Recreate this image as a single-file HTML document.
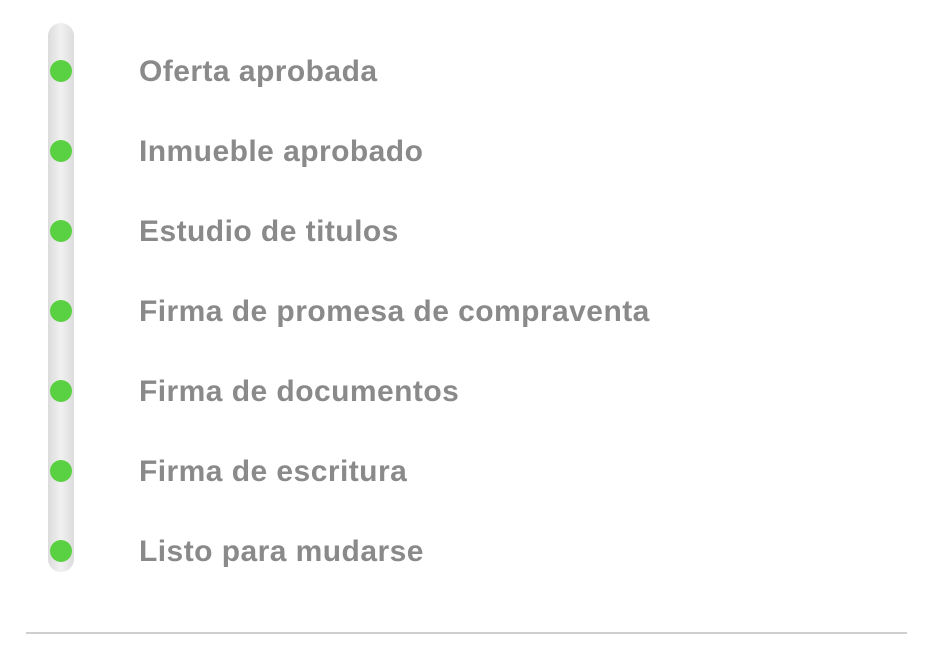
<!DOCTYPE html>
<html><head><style>
body{margin:0;width:936px;height:648px;background:#fff;position:relative;overflow:hidden;font-family:"Liberation Sans",sans-serif}
.bar{position:absolute;left:48px;top:23px;width:26px;height:549px;border-radius:13px;background:linear-gradient(90deg,#dcdcdc,#f1f1f1 50%,#dcdcdc)}
.dot{position:absolute;left:50px;width:22px;height:22px;border-radius:50%;background:#5ad142}
.t{position:absolute;left:139px;font-size:30px;letter-spacing:0.45px;font-weight:bold;color:#8a8a8a;line-height:30px}
.line{position:absolute;left:26px;top:632px;width:881px;height:2px;background:#cfcfcf}
</style></head><body>
<div class="bar"></div>
<div class="dot" style="top:60px"></div>
<div class="dot" style="top:140px"></div>
<div class="dot" style="top:220px"></div>
<div class="dot" style="top:300px"></div>
<div class="dot" style="top:380px"></div>
<div class="dot" style="top:460px"></div>
<div class="dot" style="top:540px"></div>
<div class="t" style="top:57px">Oferta aprobada</div>
<div class="t" style="top:137px">Inmueble aprobado</div>
<div class="t" style="top:217px">Estudio de titulos</div>
<div class="t" style="top:297px">Firma de promesa de compraventa</div>
<div class="t" style="top:377px">Firma de documentos</div>
<div class="t" style="top:457px">Firma de escritura</div>
<div class="t" style="top:537px">Listo para mudarse</div>
<div class="line"></div>
</body></html>
